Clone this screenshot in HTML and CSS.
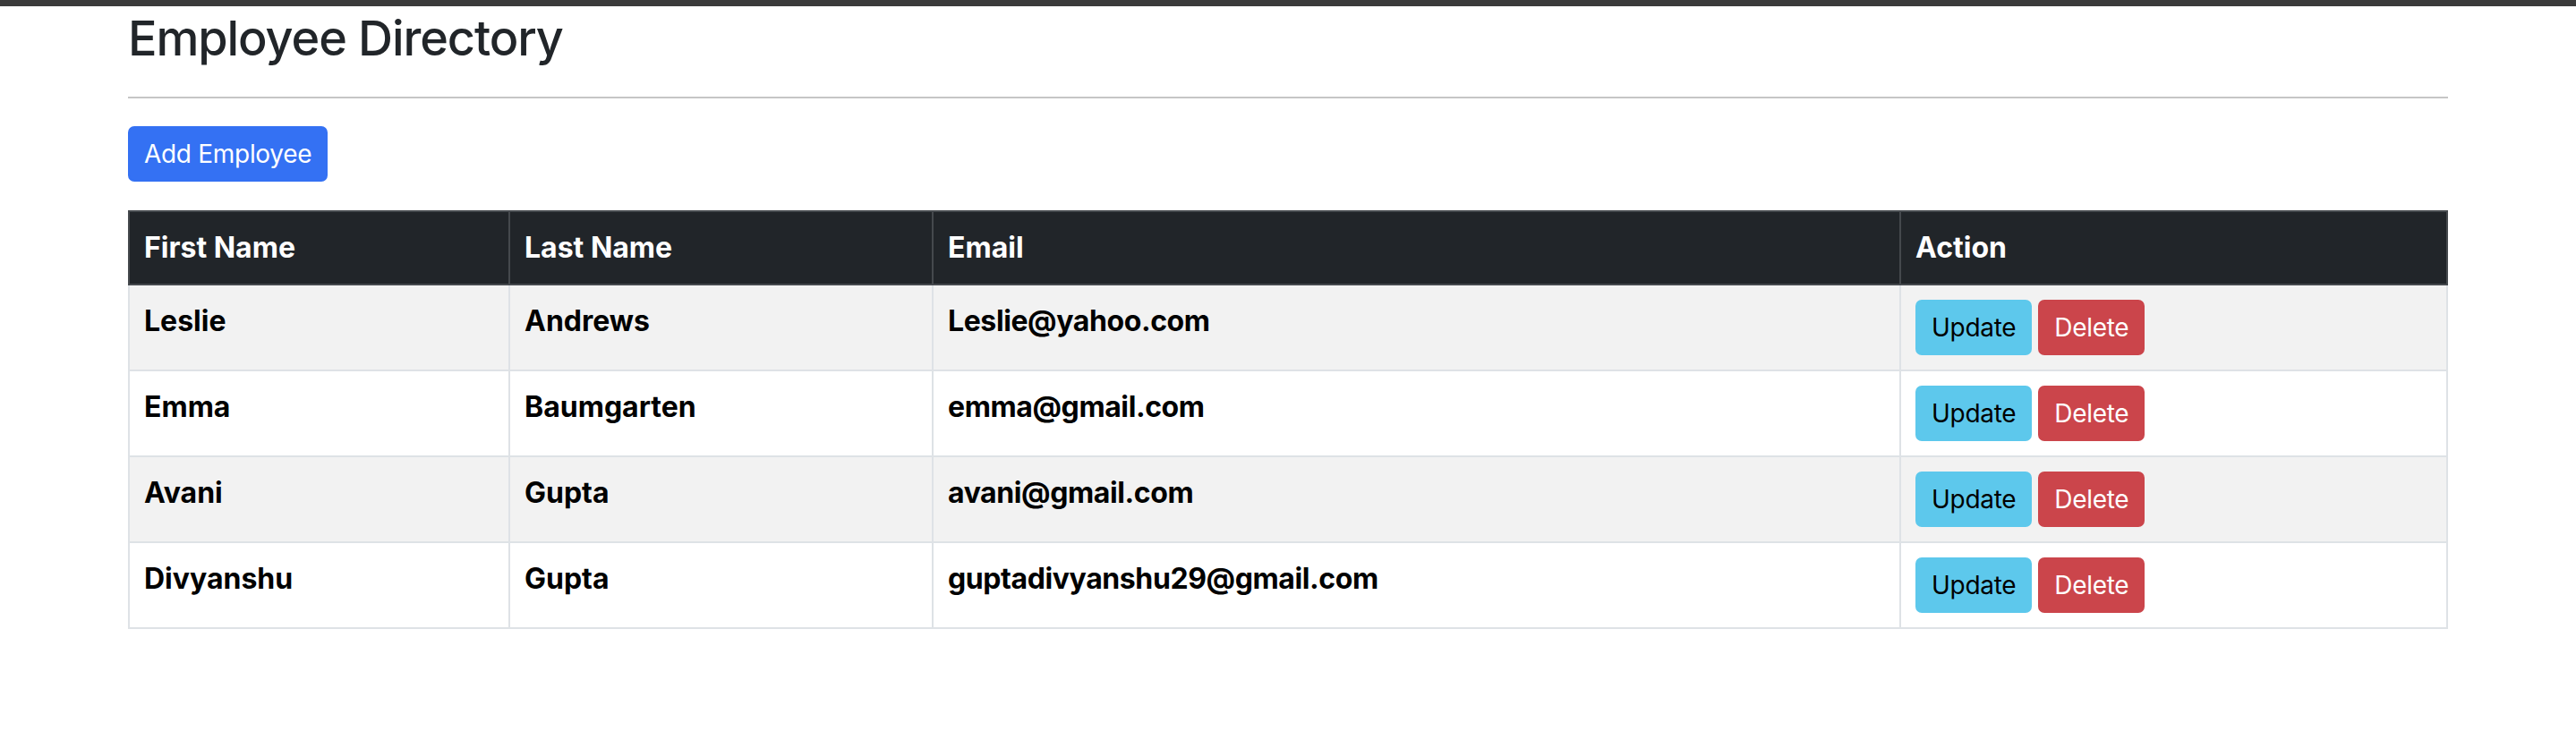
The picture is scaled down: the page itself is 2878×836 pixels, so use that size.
FILE: index.html
```html
<!DOCTYPE html>
<html lang="en">
<head>
<meta charset="utf-8">
<title>Employee Directory</title>
<link rel="stylesheet" href="styles.css">
</head>
<body>
<div class="topbar"></div>
<div class="container">
  <h3 class="title">Employee Directory</h3>
  <hr class="divider">
  <div class="toolbar">
    <button class="btn btn-primary">Add Employee</button>
  </div>
  <table class="table">
    <colgroup>
      <col class="col-first">
      <col class="col-last">
      <col class="col-email">
      <col class="col-action">
    </colgroup>
    <thead>
      <tr>
        <th>First Name</th>
        <th>Last Name</th>
        <th>Email</th>
        <th>Action</th>
      </tr>
    </thead>
    <tbody>
      <tr>
        <td>Leslie</td>
        <td>Andrews</td>
        <td class="email">Leslie@yahoo.com</td>
        <td><div class="actions"><button class="btn btn-info">Update</button><button class="btn btn-danger">Delete</button></div></td>
      </tr>
      <tr>
        <td>Emma</td>
        <td>Baumgarten</td>
        <td class="email">emma@gmail.com</td>
        <td><div class="actions"><button class="btn btn-info">Update</button><button class="btn btn-danger">Delete</button></div></td>
      </tr>
      <tr>
        <td>Avani</td>
        <td>Gupta</td>
        <td class="email">avani@gmail.com</td>
        <td><div class="actions"><button class="btn btn-info">Update</button><button class="btn btn-danger">Delete</button></div></td>
      </tr>
      <tr>
        <td>Divyanshu</td>
        <td>Gupta</td>
        <td class="email">guptadivyanshu29@gmail.com</td>
        <td><div class="actions"><button class="btn btn-info">Update</button><button class="btn btn-danger">Delete</button></div></td>
      </tr>
    </tbody>
  </table>
</div>
</body>
</html>
```

FILE: styles.css
```css
* { box-sizing: border-box; }

body {
  margin: 0;
  font-family: Inter, "Noto Sans", "Liberation Sans", sans-serif;
  color: #212529;
  background: #ffffff;
}

.topbar {
  height: 7px;
  background: #3b3b3b;
}

.container {
  max-width: 2640px;
  margin: 0 auto;
  padding: 0 24px;
}

.title {
  margin: 2px 0 0;
  font-size: 54px;
  font-weight: 500;
  line-height: 67px;
  letter-spacing: -1.1px;
  color: #212529;
}

.divider {
  margin: 32px 0 31px;
  border: 0;
  border-top: 2px solid #c6c6c6;
  height: 0;
}

.toolbar {
  margin-bottom: 32px;
}

.btn {
  display: inline-block;
  font-family: inherit;
  font-size: 28px;
  font-weight: 400;
  line-height: 42px;
  padding: 8px 16px;
  border: 2px solid transparent;
  border-radius: 7px;
  letter-spacing: -0.3px;
  cursor: pointer;
}

.btn-primary {
  background: #3471f3;
  border-color: #3471f3;
  color: #ffffff;
}

.btn-info {
  background: #5dc8ec;
  border-color: #5dc8ec;
  color: #000000;
}

.btn-danger {
  background: #cb454b;
  border-color: #cb454b;
  color: #ffffff;
}

.table {
  width: 100%;
  border-collapse: collapse;
  table-layout: fixed;
}

.col-first { width: 425px; }
.col-last { width: 473px; }
.col-email { width: 1081px; }

.table th,
.table td {
  padding: 16px;
  border: 2px solid #dee2e6;
  text-align: left;
  vertical-align: top;
  font-size: 32px;
  line-height: 48px;
  font-weight: 700;
}

.table td {
  color: #000000;
}

.table td.email {
  letter-spacing: -0.4px;
}

.table thead th {
  background: #212529;
  color: #ffffff;
  border-color: #45494d;
}

.table tbody tr:nth-child(odd) td {
  background: #f2f2f2;
}

.actions {
  display: flex;
  gap: 7px;
}
```
